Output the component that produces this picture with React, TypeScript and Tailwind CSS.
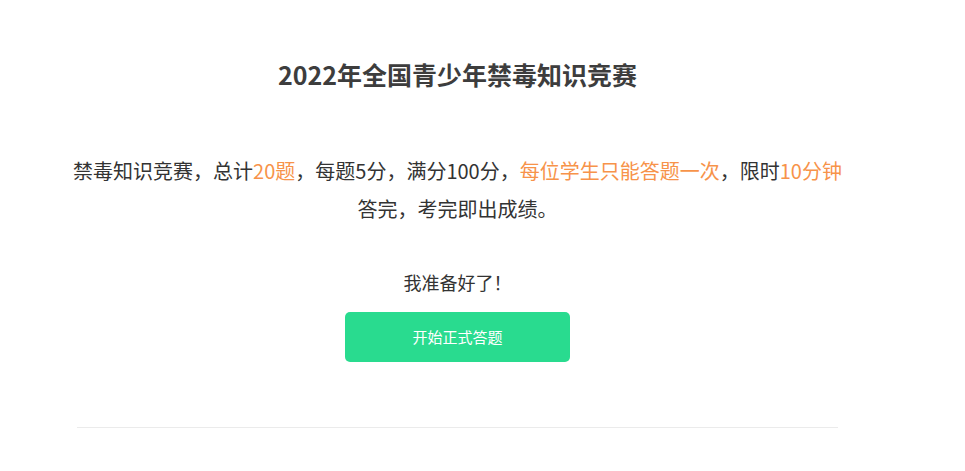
export default function App() {
  const font = { fontFamily: '"Noto Sans CJK SC", "Noto Sans", sans-serif' };
  return (
    <div className="min-h-[471px] bg-white" style={font}>
      <div className="w-[915px] pt-[53px] flex flex-col items-center">
        <h1 className="text-[25px] leading-[42px] font-bold text-[#3d3d3d]">2022年全国青少年禁毒知识竞赛</h1>

        <p className="mt-[57px] w-[776px] text-center text-[20px] leading-[38px] text-[#333]">
          禁毒知识竞赛，总计<span className="text-[#f7934a]">20题</span>，每题5分，满分100分，
          <span className="text-[#f7934a]">每位学生只能答题一次</span>，限时<span className="text-[#f7934a]">10分钟</span>
          答完，考完即出成绩。
        </p>

        <p className="mt-[41px] text-[18px] leading-[26px] text-[#333]">我准备好了！</p>

        <button className="mt-[17px] w-[225px] h-[50px] rounded-[5px] bg-[#29db8f] text-white text-[15px]">
          开始正式答题
        </button>

        <div className="mt-[65px] w-[761px] h-px bg-[#ebebeb]" />
      </div>
    </div>
  );
}
